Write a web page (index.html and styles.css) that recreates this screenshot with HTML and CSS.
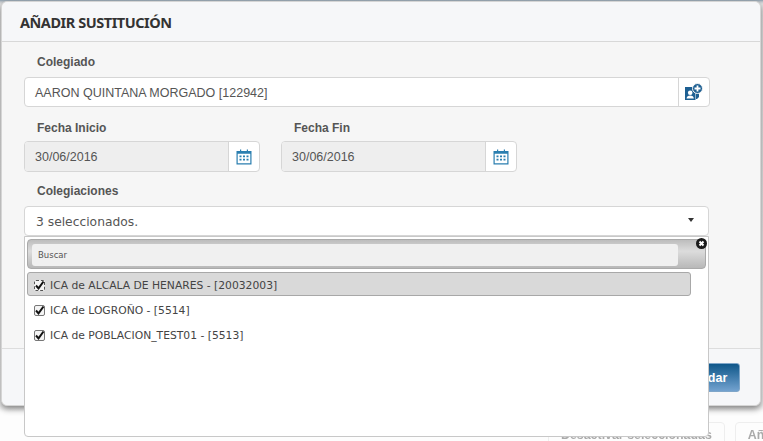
FILE: index.html
```html
<!DOCTYPE html>
<html lang="es">
<head>
  <meta charset="UTF-8">
  <title>Añadir sustitución</title>
  <link rel="stylesheet" href="styles.css">
</head>
<body>
  <div class="page-actions">
    <span class="page-btn">Desactivar seleccionadas</span>
    <span class="page-btn">Añadir</span>
  </div>
  <div class="modal">
    <div class="modal-header">AÑADIR SUSTITUCIÓN</div>
    <div class="modal-body">
      <div class="field">
        <label>Colegiado</label>
        <div class="input-group">
          <div class="input">AARON QUINTANA MORGADO [122942]</div>
          <div class="addon">
            <svg width="20" height="18" viewBox="0 0 20 18">
              <path fill="#1d5f92" d="M1 4h10.500v13H1z"/>
              <path fill="#1d5f92" d="M12 5h3v9l-2 2h-1z"/>
              <circle fill="#fff" cx="6.200" cy="9.800" r="2.300"/>
              <path fill="#fff" d="M2.600 15.500c0-2 1.600-3 3.600-3s3.600 1 3.600 3z"/>
              <circle fill="#1d5f92" stroke="#f6f6f6" cx="13.500" cy="5.500" r="5"/>
              <path fill="#fff" d="M12.600 2.500h1.800v2.100h2.100v1.800h-2.100v2.100h-1.800V6.400h-2.100V4.600h2.100z"/>
            </svg>
          </div>
        </div>
      </div>
      <div class="date-row">
        <div class="field date-field">
          <label>Fecha Inicio</label>
          <div class="input-group">
            <div class="input disabled">30/06/2016</div>
            <div class="addon">
              <svg width="16" height="16" viewBox="0 0 16 16" class="cal">
                <path fill="none" stroke="#2b7fb0" stroke-width="1.200" d="M1.100 2.600h13.800v12.300H1.100z"/>
                <path fill="#2b7fb0" d="M1 2.500h14v2.300H1zM4 .5h1.200v2.500H4zM10.800 .5H12v2.500h-1.200z"/>
                <path fill="#2b7fb0" d="M3.500 6.500h2v1.800h-2zM7 6.500h2v1.800H7zM10.500 6.500h2v1.800h-2zM3.500 9.800h2v1.800h-2zM7 9.800h2v1.800H7zM10.500 9.800h2v1.800h-2z"/>
              </svg>
            </div>
          </div>
        </div>
        <div class="field date-field">
          <label>Fecha Fin</label>
          <div class="input-group">
            <div class="input disabled">30/06/2016</div>
            <div class="addon">
              <svg width="16" height="16" viewBox="0 0 16 16" class="cal">
                <path fill="none" stroke="#2b7fb0" stroke-width="1.200" d="M1.100 2.600h13.800v12.300H1.100z"/>
                <path fill="#2b7fb0" d="M1 2.500h14v2.300H1zM4 .5h1.200v2.500H4zM10.800 .5H12v2.500h-1.200z"/>
                <path fill="#2b7fb0" d="M3.500 6.500h2v1.800h-2zM7 6.500h2v1.800H7zM10.500 6.500h2v1.800h-2zM3.500 9.800h2v1.800h-2zM7 9.800h2v1.800H7zM10.500 9.800h2v1.800h-2z"/>
              </svg>
            </div>
          </div>
        </div>
      </div>
      <div class="field">
        <label>Colegiaciones</label>
        <div class="select">
          <span>3 seleccionados.</span>
          <span class="caret"></span>
          <div class="dropdown">
            <div class="dropdown-head">
              <div class="search">Buscar</div>
              <span class="close">
                <svg width="11" height="11" viewBox="0 0 11 11">
                  <circle cx="5.500" cy="5.500" r="5.500" fill="#1a1a1a"/>
                  <path stroke="#fff" stroke-width="2" d="M3.500 3.500l4 4M7.500 3.500l-4 4"/>
                </svg>
              </span>
            </div>
            <ul class="options">
              <li class="active"><span class="check focus"><svg width="11" height="11" viewBox="0 0 11 11"><path fill="none" stroke="#111" stroke-width="2" d="M2 5.500l2.500 2.800L9.500 1.500"/></svg></span>ICA de ALCALA DE HENARES - [20032003]</li>
              <li><span class="check"><svg width="11" height="11" viewBox="0 0 11 11"><path fill="none" stroke="#111" stroke-width="2" d="M2 5.500l2.500 2.800L9.500 1.500"/></svg></span>ICA de LOGROÑO - [5514]</li>
              <li><span class="check"><svg width="11" height="11" viewBox="0 0 11 11"><path fill="none" stroke="#111" stroke-width="2" d="M2 5.500l2.500 2.800L9.500 1.500"/></svg></span>ICA de POBLACION_TEST01 - [5513]</li>
            </ul>
          </div>
        </div>
      </div>
    </div>
    <div class="modal-footer">
      <button class="btn-save">Guardar</button>
    </div>
  </div>
</body>
</html>
```

FILE: styles.css
```css
html, body {
  height: 100%;
}
body {
  margin: 0;
  padding: 1px 2px 0 1px;
  box-sizing: border-box;
  height: 441px;
  overflow: hidden;
  position: relative;
  background: linear-gradient(#8d9fae 0, #c9cdd1 2px, #e4e4e4 4px, #f2f2f2 406px, #fdfdfd 412px);
  font-family: "Liberation Sans", Arial, sans-serif;
  color: #555;
}
.page-actions {
  position: absolute;
  left: 548px;
  right: 0;
  top: 422px;
  display: flex;
  gap: 10px;
  overflow: hidden;
  filter: blur(0.6px);
}
.page-btn {
  flex: none;
  padding: 5px 12px 4px;
  border: 1px solid #eee;
  border-radius: 4px;
  font-size: 12.400px;
  font-weight: bold;
  color: #aaa;
  white-space: nowrap;
}
.modal {
  position: relative;
  height: 405px;
  display: flex;
  flex-direction: column;
  box-sizing: border-box;
  background: #f6f6f6;
  border: 1px solid #d5d5d5;
  border-radius: 6px;
  box-shadow: 0 3px 6px #0007;
}
.modal-header {
  height: 40px;
  box-sizing: border-box;
  padding: 10px 18px 0;
  background: #f6f7f9;
  border-bottom: 1px solid #d8d8d8;
  border-radius: 6px 6px 0 0;
  font-family: "Noto Sans", sans-serif;
  font-size: 14.500px;
  font-weight: bold;
  letter-spacing: -0.45px;
  line-height: 20px;
  color: #333;
}
.modal-body {
  flex: 1;
  padding: 13px 50px 0 22px;
}
.field label {
  display: block;
  height: 22px;
  padding-left: 13px;
  font-size: 12px;
  font-weight: bold;
  line-height: 14px;
  color: #555;
}
.input-group {
  display: flex;
  height: 30px;
  box-sizing: border-box;
  border: 1px solid #d6d6d6;
  border-radius: 4px;
  background: #fff;
}
.input {
  flex: 1;
  padding-left: 10px;
  font-size: 12.500px;
  line-height: 30px;
  color: #555;
  border-radius: 3px 0 0 3px;
}
.input.disabled {
  background: #eeeeee;
}
.addon {
  flex: none;
  width: 30px;
  display: flex;
  align-items: center;
  justify-content: center;
  border-left: 1px solid #d6d6d6;
}
.date-row {
  display: flex;
  gap: 21px;
  margin-top: 14px;
  margin-bottom: 12px;
}
.date-field {
  width: 236px;
}
.date-field label {
  height: 20px;
}
.date-field .input-group {
  height: 31px;
}
.date-field .input {
  line-height: 31px;
}
.select {
  position: relative;
  height: 30px;
  margin-right: 1px;
  box-sizing: border-box;
  display: flex;
  justify-content: space-between;
  align-items: center;
  padding: 2px 14px 0 11px;
  background: #fff;
  border: 1px solid #d6d6d6;
  border-radius: 4px;
  font-family: "DejaVu Sans", sans-serif;
  font-size: 12.300px;
  color: #555;
}
.caret {
  width: 0;
  height: 0;
  margin-top: -4px;
  border-left: 3.500px solid transparent;
  border-right: 3.500px solid transparent;
  border-top: 4px solid #333;
}
.dropdown {
  position: absolute;
  left: -1px;
  right: -1px;
  top: 29px;
  height: 201px;
  box-sizing: border-box;
  padding: 2px;
  background: #fff;
  border: 1px solid #c8c8c8;
  border-radius: 0 0 4px 4px;
  z-index: 2;
}
.dropdown-head {
  position: relative;
  height: 30px;
  box-sizing: border-box;
  padding: 4px 27px 0 4px;
  background: linear-gradient(#bdbdbd, #dcdcdc 40%, #b8b8b8);
  border: 1px solid #aaa;
  border-radius: 4px;
}
.search {
  height: 22px;
  box-sizing: border-box;
  padding-left: 6px;
  background: #f0f0f0;
  border-radius: 3px;
  font-family: "DejaVu Sans", sans-serif;
  font-size: 8.500px;
  line-height: 22px;
  color: #555;
}
.close {
  position: absolute;
  right: -2px;
  top: -2px;
  line-height: 0;
}
.options {
  list-style: none;
  margin: 3px 15px 0 0;
  padding: 0;
  font-family: "DejaVu Sans", sans-serif;
  font-size: 10.750px;
  color: #444;
}
.options li {
  display: flex;
  align-items: center;
  gap: 5px;
  height: 25px;
  box-sizing: border-box;
  padding: 2px 0 0 6px;
  border: 1px solid transparent;
  white-space: nowrap;
}
.options li.active {
  height: 24px;
  margin-bottom: 1px;
  background: #d9d9d9;
  border-color: #a8a8a8;
  border-radius: 3px;
}
.check {
  width: 11px;
  height: 11px;
  box-sizing: border-box;
  border: 1px solid #777;
  border-radius: 2px;
  background: #f4f4f4;
  display: flex;
  align-items: center;
  justify-content: center;
  flex: none;
}
.check svg {
  width: 11px;
  height: 11px;
  flex: none;
}
.check.focus {
  border: 1px dashed #555;
}
.modal-footer {
  height: 57px;
  box-sizing: border-box;
  display: flex;
  justify-content: flex-end;
  padding: 14px 20px 0 0;
  background: #f6f7f9;
  border-top: 1px solid #ddd;
  border-radius: 0 0 6px 6px;
}
.btn-save {
  width: 74px;
  height: 29px;
  padding: 0;
  border: 1px solid #7fa6c9;
  border-radius: 3px;
  background: linear-gradient(#0f578a, #73a2cf);
  color: #fff;
  font-family: "Liberation Sans", Arial, sans-serif;
  font-size: 12.500px;
  font-weight: bold;
}
```
